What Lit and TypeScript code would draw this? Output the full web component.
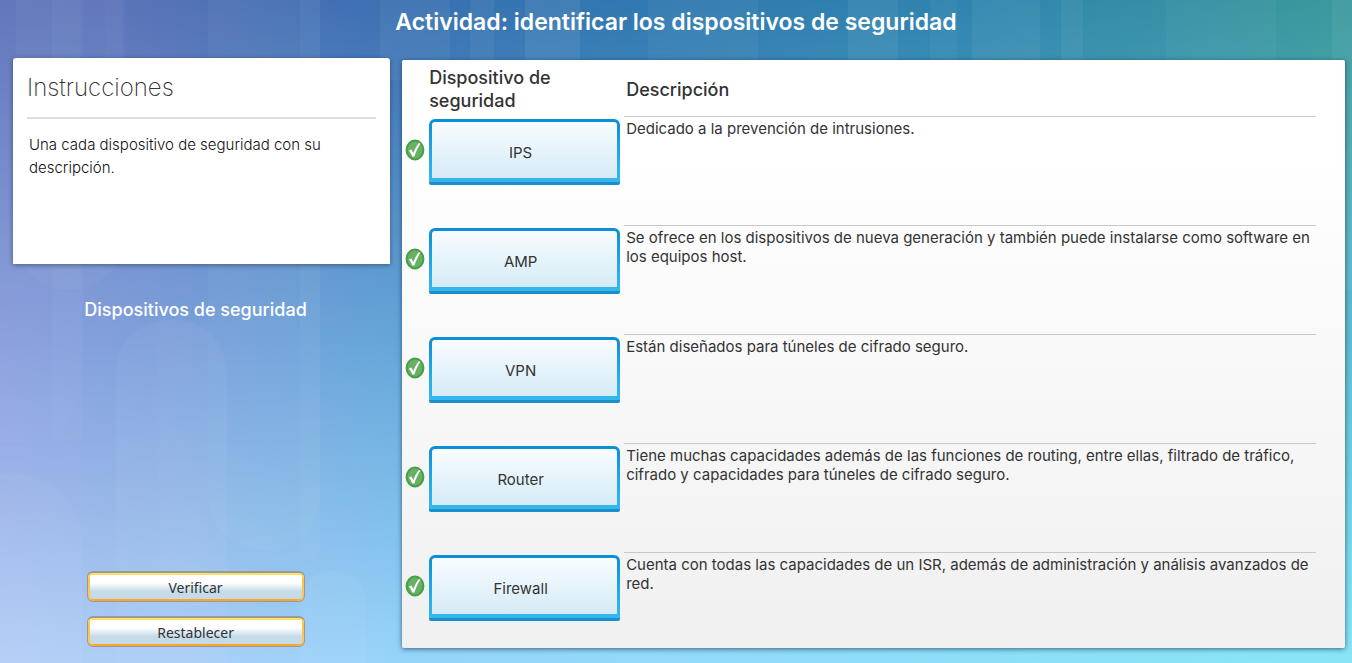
import { LitElement, html, svg, css } from "lit";
import { customElement, property } from "lit/decorators.js";

@customElement("activity-backdrop")
class ActivityBackdrop extends LitElement {
  static styles = css`
    :host { display: block; }
    svg { display: block; width: 100%; height: 100%; }
    .fade { mask-type: luminance; }
  `;

  private stops(id: string, list: [number, string][]) {
    return svg`<linearGradient id=${id} x1="0" y1="0" x2="1" y2="0">
      ${list.map(([at, color]) => svg`<stop offset=${at} stop-color=${color}></stop>`)}
    </linearGradient>`;
  }

  render() {
    // x, y, width, height, corner radius, opacity
    const bars: [number, number, number, number, number, number][] = [
      [16, -80, 107, 370, 53, 0.03],
      [52, -60, 31, 500, 0, 0.03],
      [-60, 473, 142, 400, 70, 0.04],
      [-60, -60, 140, 502, 60, 0.02],
      [116, 320, 111, 500, 52, 0.04],
      [105, -80, 20, 200, 0, 0.02],
      [158, 320, 50, 500, 0, 0.02],
      [208, -80, 112, 630, 54, 0.03],
      [300, -60, 20, 620, 10, 0.03],
      [300, 570, 66, 300, 33, 0.04],
      [380, -10, 70, 90, 0, 0.05],
      [470, -10, 24, 90, 0, 0.05],
      [525, -10, 55, 90, 0, 0.07],
      [648, -10, 110, 90, 0, 0.04],
      [848, -10, 50, 90, 0, 0.06],
      [930, -10, 27, 90, 0, 0.04],
      [972, -10, 68, 90, 0, 0.05],
      [1061, -10, 22, 90, 0, 0.05],
      [1166, -10, 110, 90, 0, 0.03],
      [1332, -10, 30, 300, 0, 0.05],
    ];
    return html`<svg viewBox="0 0 1352 663" preserveAspectRatio="none" aria-hidden="true">
      <defs>
        ${this.stops("top", [[0, "#5f75b9"], [0.08, "#5c73b8"], [0.29, "#3b6fb1"], [0.47, "#3077af"], [0.72, "#2f84ae"], [1, "#3b999b"]])}
        ${this.stops("mid", [[0, "#8da1df"], [0.12, "#7fa2dc"], [0.3, "#66a8da"], [1, "#62bfd3"]])}
        ${this.stops("low", [[0, "#b4cef6"], [0.15, "#a9cff6"], [0.3, "#97d5fb"], [1, "#88e6f6"]])}
        <linearGradient id="down" x1="0" y1="0" x2="0" y2="1">
          <stop offset="0" stop-color="#fff"></stop><stop offset="1" stop-color="#000"></stop>
        </linearGradient>
        <linearGradient id="up" x1="0" y1="1" x2="0" y2="0">
          <stop offset="0" stop-color="#fff"></stop><stop offset="1" stop-color="#000"></stop>
        </linearGradient>
        <mask id="upper" class="fade"><rect width="1352" height="350" fill="url(#down)"></rect></mask>
        <mask id="lower" class="fade"><rect y="350" width="1352" height="313" fill="url(#up)"></rect></mask>
      </defs>
      <rect width="1352" height="663" fill="url(#mid)"></rect>
      <rect width="1352" height="350" fill="url(#top)" mask="url(#upper)"></rect>
      <rect y="350" width="1352" height="313" fill="url(#low)" mask="url(#lower)"></rect>
      ${bars.map(([x, y, w, h, r, o]) => svg`<rect x=${x} y=${y} width=${w} height=${h} rx=${r} fill="#fff" fill-opacity=${o}></rect>`)}
    </svg>`;
  }
}

@customElement("correct-mark")
class CorrectMark extends LitElement {
  static styles = css`
    :host { display: block; width: 20px; height: 22px; }
    svg { display: block; }
  `;

  render() {
    return html`<svg width="20" height="22" viewBox="0 0 20 22" role="img" aria-label="Correcto">
      <ellipse cx="10" cy="11" rx="8.4" ry="9.4" fill="#69b065" stroke="#45a046" stroke-width="2"></ellipse>
      <path d="M3.8 11.6 L6.4 10.4 L8.3 14 C9.6 10.6 11.2 7.4 13.6 4.2 L15.6 4.6 C12.8 8.6 10.9 13 9.4 17.6 L7.2 17.6 C6.4 15.2 5.2 13.2 3.8 11.6 Z" fill="#fff"></path>
    </svg>`;
  }
}

@customElement("device-tile")
class DeviceTile extends LitElement {
  @property() name = "";

  static styles = css`
    :host { display: block; }
    .tile {
      display: block;
      box-sizing: border-box;
      width: 100%;
      height: 66px;
      padding: 6px 16px 0 8px;
      border: 3px solid transparent;
      border-bottom-width: 7px;
      border-radius: 6px 6px 2px 2px;
      background:
        linear-gradient(#f8fcff, #d5ebf6) padding-box,
        linear-gradient(#0a8fd6, #23a6e4 50%, #35b8f0 95%, #1b8fc6 96%) border-box;
      color: #333;
      font: 15px/20px Inter, "Liberation Sans", sans-serif;
      cursor: grab;
    }
  `;

  render() {
    return html`<button class="tile" type="button">${this.name}</button>`;
  }
}

interface Device {
  name: string;
  description: string;
}

@customElement("app-root")
class AppRoot extends LitElement {
  private devices: Device[] = [
    { name: "IPS", description: "Dedicado a la prevención de intrusiones." },
    { name: "AMP", description: "Se ofrece en los dispositivos de nueva generación y también puede instalarse como software en los equipos host." },
    { name: "VPN", description: "Están diseñados para túneles de cifrado seguro." },
    { name: "Router", description: "Tiene muchas capacidades además de las funciones de routing, entre ellas, filtrado de tráfico, cifrado y capacidades para túneles de cifrado seguro." },
    { name: "Firewall", description: "Cuenta con todas las capacidades de un ISR, además de administración y análisis avanzados de red." },
  ];

  static styles = css`
    :host {
      display: block;
      position: relative;
      font-family: Inter, "Liberation Sans", sans-serif;
      color: #333;
    }
    * { box-sizing: border-box; }
    .backdrop { position: absolute; inset: 0; }
    .page {
      position: relative;
      display: flex;
      flex-direction: column;
      min-height: 100vh;
      padding: 0 7px 15px 13px;
    }
    .title {
      margin: 0;
      padding: 8px 6px 24px 0;
      color: #fff;
      font-size: 23px;
      line-height: 28px;
      font-weight: 600;
      text-align: center;
    }
    .columns {
      flex: 1;
      display: grid;
      grid-template-columns: 2fr 5fr;
      gap: 12px;
    }
    .side { display: flex; flex-direction: column; margin-top: -2px; }
    .instructions {
      min-height: 206px;
      padding: 14px 14px 16px;
      border-radius: 3px 3px 0 0;
      background: #fff;
      box-shadow: 0 1px 5px rgba(40, 50, 80, 0.6);
    }
    .instructions h2 {
      margin: 0 0 14px;
      padding-bottom: 14px;
      border-bottom: 2px solid #ddd;
      color: #333;
      font-size: 24px;
      line-height: 31px;
      font-weight: 200;
    }
    .instructions p {
      margin: 0;
      padding: 0 2px;
      color: #111;
      font-size: 15px;
      line-height: 23px;
      font-weight: 300;
    }
    .bank {
      margin: 34px 0 0;
      padding-right: 12px;
      color: #fff;
      font-size: 18px;
      line-height: 24px;
      font-weight: 500;
      text-align: center;
    }
    .actions {
      display: flex;
      flex-direction: column;
      align-items: center;
      gap: 14px;
      margin-top: auto;
      padding: 0 12px 1px 0;
    }
    .action {
      width: 218px;
      height: 31px;
      padding: 2px 8px 0;
      border: 1px solid #9a9a9a;
      border-top-width: 2px;
      border-radius: 6px;
      background: linear-gradient(#fff 35%, #c5dce8 65%, #c5dce8);
      box-shadow: inset 0 2px 0 #ffe262, inset 2px 0 0 #ffc548, inset -2px 0 0 #ffc548, inset 0 -2px 0 #fba629;
      color: #333;
      font: 14px/20px "Noto Sans", "Open Sans", sans-serif;
      cursor: pointer;
    }
    .board {
      padding-right: 29px;
      border-radius: 2px;
      background: linear-gradient(#fff, #fff 15%, #f0f0f0);
      box-shadow: 0 1px 5px rgba(20, 50, 80, 0.7);
    }
    table { width: 100%; border-spacing: 0; table-layout: fixed; }
    .col-mark { width: 27px; }
    .col-device { width: 191px; }
    th, td { padding: 0; text-align: left; vertical-align: top; }
    th {
      height: 56px;
      padding-top: 2px;
      vertical-align: middle;
      font-size: 18px;
      line-height: 23px;
      font-weight: 500;
    }
    .head-description { padding-left: 6px; }
    tbody td { height: 109px; }
    tbody tr:last-child td { height: 96px; }
    .mark { padding: 23px 0 0 3px; }
    .device { padding-top: 3px; }
    .description { padding-left: 4px; }
    .description p {
      margin: 0;
      padding: 2px 0 0 2px;
      border-top: 1px solid #c8c8c8;
      font-size: 15px;
      line-height: 19px;
    }
  `;

  render() {
    return html`
      <activity-backdrop class="backdrop"></activity-backdrop>
      <main class="page">
        <h1 class="title">Actividad: identificar los dispositivos de seguridad</h1>
        <div class="columns">
          <div class="side">
            <section class="instructions">
              <h2>Instrucciones</h2>
              <p>Una cada dispositivo de seguridad con su descripción.</p>
            </section>
            <h2 class="bank">Dispositivos de seguridad</h2>
            <div class="actions">
              <button class="action" type="button">Verificar</button>
              <button class="action" type="button">Restablecer</button>
            </div>
          </div>
          <section class="board">
            <table>
              <colgroup><col class="col-mark" /><col class="col-device" /><col /></colgroup>
              <thead>
                <tr>
                  <td></td>
                  <th scope="col">Dispositivo de seguridad</th>
                  <th scope="col" class="head-description">Descripción</th>
                </tr>
              </thead>
              <tbody>
                ${this.devices.map((device) => html`
                  <tr>
                    <td class="mark"><correct-mark></correct-mark></td>
                    <td class="device"><device-tile name=${device.name}></device-tile></td>
                    <td class="description"><p>${device.description}</p></td>
                  </tr>
                `)}
              </tbody>
            </table>
          </section>
        </div>
      </main>
    `;
  }
}
